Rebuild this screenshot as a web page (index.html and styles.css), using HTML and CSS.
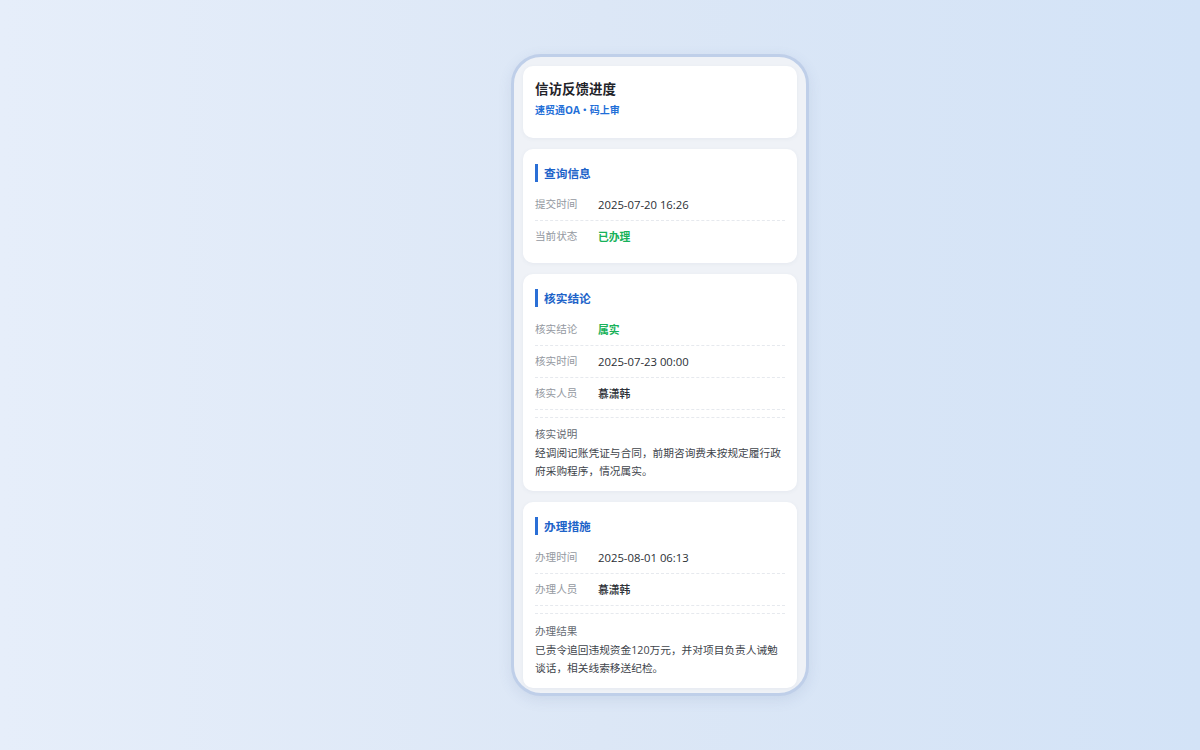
FILE: index.html
```html
<!DOCTYPE html>
<html lang="zh-CN">
<head>
<meta charset="utf-8">
<title>信访反馈进度</title>
<link rel="stylesheet" href="styles.css">
</head>
<body>
<div class="stage">
  <div class="phone">
    <div class="card header">
      <div class="title">信访反馈进度</div>
      <div class="subtitle">速贸通OA・码上审</div>
    </div>

    <div class="card">
      <div class="sec-title">查询信息</div>
      <div class="row"><span class="label">提交时间</span><span class="value">2025-07-20 16:26</span></div>
      <div class="row last"><span class="label">当前状态</span><span class="value green">已办理</span></div>
    </div>

    <div class="card">
      <div class="sec-title">核实结论</div>
      <div class="row"><span class="label">核实结论</span><span class="value green">属实</span></div>
      <div class="row"><span class="label">核实时间</span><span class="value">2025-07-23 00:00</span></div>
      <div class="row"><span class="label">核实人员</span><span class="value name">慕潇韩</span></div>
      <div class="desc">
        <div class="desc-label">核实说明</div>
        <div class="desc-text">经调阅记账凭证与合同，前期咨询费未按规定履行政府采购程序，情况属实。</div>
      </div>
    </div>

    <div class="card">
      <div class="sec-title">办理措施</div>
      <div class="row"><span class="label">办理时间</span><span class="value">2025-08-01 06:13</span></div>
      <div class="row"><span class="label">办理人员</span><span class="value name">慕潇韩</span></div>
      <div class="desc">
        <div class="desc-label">办理结果</div>
        <div class="desc-text">已责令追回违规资金120万元，并对项目负责人诫勉谈话，相关线索移送纪检。</div>
      </div>
    </div>
  </div>
</div>
</body>
</html>
```

FILE: styles.css
```css
* { box-sizing: border-box; }
html, body { margin: 0; padding: 0; }
body {
  width: 1200px;
  height: 750px;
  background: linear-gradient(90deg, #e6eefa 0%, #dce7f6 50%, #d3e3f7 100%);
  font-family: "Open Sans", "Noto Sans CJK SC", sans-serif;
  color: #2b2f36;
}
.stage {
  height: 750px;
  display: flex;
  align-items: center;
  justify-content: center;
  padding-left: 120px;
}
.phone {
  width: 298px;
  height: 642px;
  border: 3px solid #bfcfe9;
  border-radius: 30px;
  background: #eff2f7;
  padding: 9px;
  overflow: hidden;
  display: flex;
  flex-direction: column;
  gap: 11px;
  box-shadow: 0 4px 14px rgba(80, 110, 160, 0.12);
}
.card {
  flex-shrink: 0;
  background: #ffffff;
  border-radius: 10px;
  padding: 15px 12px 11px;
  box-shadow: 0 1px 4px rgba(60, 80, 120, 0.06);
}
.card.header {
  padding: 14px 12px 20px;
}
.title {
  font-size: 13.5px;
  line-height: 18px;
  font-weight: 700;
  color: #1f2329;
}
.subtitle {
  margin-top: 4.5px;
  font-size: 10px;
  line-height: 15px;
  font-weight: 700;
  color: #1f6fd8;
}
.sec-title {
  font-size: 11.7px;
  line-height: 18px;
  font-weight: 700;
  color: #1d63c9;
  border-left: 3px solid #2a6fd6;
  padding-left: 6px;
  margin-bottom: 7px;
}
.row {
  display: flex;
  align-items: center;
  padding: 8px 0;
  line-height: 15px;
  border-bottom: 1px dashed #e6e9ee;
}
.row.last { border-bottom: none; }
.label {
  width: 63px;
  flex-shrink: 0;
  font-size: 10.6px;
  color: #9499a1;
}
.value {
  font-size: 11.3px;
  color: #2b2f36;
}
.value.name { font-weight: 500; font-size: 10.8px; }
.value.green {
  color: #18b25a;
  font-weight: 700;
  font-size: 10.8px;
}
.desc {
  margin-top: 7px;
  border-top: 1px dashed #e6e9ee;
  padding-top: 9.5px;
}
.desc-label {
  font-size: 10.6px;
  line-height: 14px;
  color: #666b73;
}
.desc-text {
  margin-top: 3px;
  font-size: 10.7px;
  line-height: 18px;
  color: #40444b;
}
```
